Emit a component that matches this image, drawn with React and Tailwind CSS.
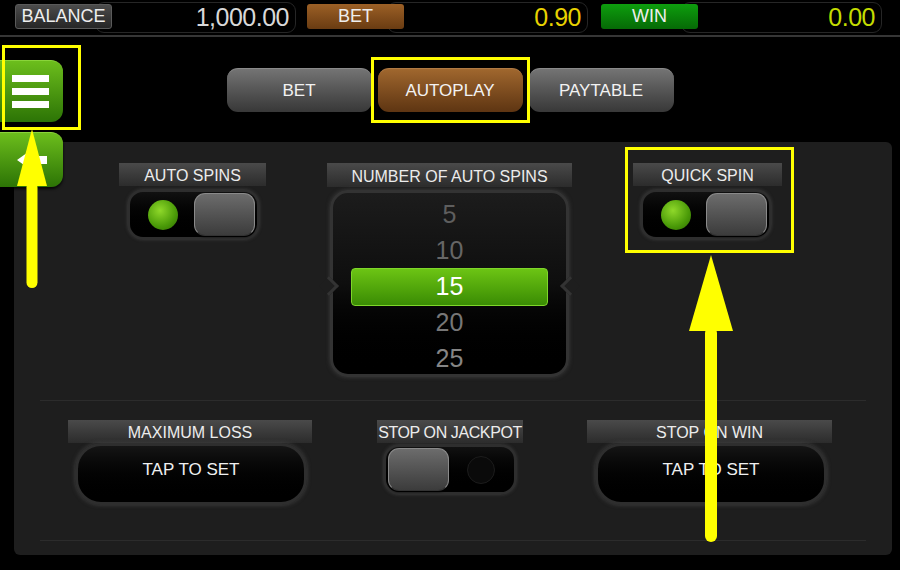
import React from "react";

const font = { fontFamily: '"Liberation Sans", Arial, sans-serif' };

function TopGroup({ label, value, labelCls, valueCls, className = "" }) {
  return (
    <div className={"flex items-start " + className}>
      <div
        className={
          "relative z-10 mt-[2px] flex h-[25px] w-[97px] items-center justify-center rounded-[3px] text-[18px] text-[#eeeeee] " +
          labelCls
        }
      >
        {label}
      </div>
      <div className="-ml-[17px] flex h-[31px] w-[201px] items-center justify-end rounded-[9px] border border-[#262626] bg-black pr-[6px]">
        <span className={"text-[25px] font-light tracking-[-0.5px] " + valueCls}>{value}</span>
      </div>
    </div>
  );
}

function Tab({ children, active }) {
  return (
    <div
      className={
        "flex h-[44px] w-[145px] items-center justify-center rounded-[11px] border-t text-[17px] text-[#f2f2f2] shadow-[0_2px_3px_rgba(0,0,0,0.8)] " +
        (active
          ? "border-[#b07a44] bg-gradient-to-b from-[#a0672e] to-[#5e3512]"
          : "border-[#8a8a8a] bg-gradient-to-b from-[#747474] to-[#383838]")
      }
    >
      {children}
    </div>
  );
}

function Header({ children, className = "" }) {
  return (
    <div
      className={
        "flex h-[23px] items-center justify-center whitespace-nowrap bg-gradient-to-b from-[#4a4a4a] to-[#2c2c2c] pt-[3px] text-[16px] leading-none text-[#ececec] " +
        className
      }
    >
      {children}
    </div>
  );
}

function Knob({ className = "" }) {
  return (
    <div
      className={
        "h-[43px] w-[61px] rounded-[11px] border border-[#8a8a8a] border-b-[#333] bg-gradient-to-b from-[#6c6c6c] to-[#3c3c3c] shadow-[0_1px_2px_rgba(0,0,0,0.9)] " +
        className
      }
    />
  );
}

function Toggle({ on, className = "" }) {
  return (
    <div
      className={
        "flex h-[51px] items-center rounded-[16px] border-[3px] border-[#2e2e2e] bg-gradient-to-b from-[#111] to-[#000] px-[2px] shadow-[0_0_3px_rgba(60,60,60,0.9)] " +
        className
      }
    >
      {on ? (
        <>
          <div className="flex flex-1 justify-center">
            <div className="h-[30px] w-[30px] rounded-full bg-[radial-gradient(circle_at_40%_35%,#8fd82a,#4a9a08_60%,#2e6a02)]" />
          </div>
          <Knob />
        </>
      ) : (
        <>
          <Knob />
          <div className="flex flex-1 justify-center">
            <div className="h-[28px] w-[28px] rounded-full border border-[#1c1c1c] bg-[#0a0a0a]" />
          </div>
        </>
      )}
    </div>
  );
}

function TapField({ className = "" }) {
  return (
    <div
      className={
        "flex h-[62px] items-center justify-center rounded-[26px] border-[3px] border-[#2e2e2e] bg-gradient-to-b from-[#151515] to-[#000] pb-[8px] text-[17px] text-[#f0f0f0] shadow-[0_0_4px_rgba(70,70,70,0.9)] " +
        className
      }
    >
      TAP TO SET
    </div>
  );
}

function YellowArrow({ x, tipY, headY, endY, headW, shaftW }) {
  const w = headW + 4;
  const h = endY - tipY + 4;
  const cx = w / 2;
  return (
    <svg
      className="pointer-events-none absolute z-30"
      style={{ left: x - cx, top: tipY - 2 }}
      width={w}
      height={h}
    >
      <polygon
        points={`${cx},2 ${cx + headW / 2},${headY - tipY + 2} ${cx - headW / 2},${headY - tipY + 2}`}
        fill="#ffff00"
      />
      <rect
        x={cx - shaftW / 2}
        y={headY - tipY - 2}
        width={shaftW}
        height={endY - headY + 2}
        rx={shaftW / 2}
        fill="#ffff00"
      />
    </svg>
  );
}

export default function App() {
  const nums = [
    { n: "5", c: "text-[#5e5e5e]" },
    { n: "10", c: "text-[#666666]" },
    { n: "15", c: "text-white" },
    { n: "20", c: "text-[#777777]" },
    { n: "25", c: "text-[#858585]" },
  ];
  return (
    <div className="relative h-[570px] w-[900px] overflow-hidden bg-black" style={font}>
      {/* Top bar */}
      <div className="flex h-[37px] border-b-2 border-[#363636] pl-[15px] pt-[2px]">
        <TopGroup
          label="BALANCE"
          value="1,000.00"
          labelCls="border border-[#5a5a5a] bg-gradient-to-b from-[#4c4c4c] to-[#262626]"
          valueCls="text-[#d8d8d8]"
        />
        <TopGroup
          className="ml-[11px]"
          label="BET"
          value="0.90"
          labelCls="bg-gradient-to-b from-[#9c6026] to-[#6a3c12]"
          valueCls="text-[#e8d200]"
        />
        <TopGroup
          className="ml-[13px]"
          label="WIN"
          value="0.00"
          labelCls="bg-gradient-to-b from-[#0e9e0e] to-[#066a06]"
          valueCls="text-[#c4dc00]"
        />
      </div>

      {/* Tabs */}
      <div className="mt-[31px] flex justify-center gap-[6px]">
        <Tab>BET</Tab>
        <Tab active>AUTOPLAY</Tab>
        <Tab>PAYTABLE</Tab>
      </div>

      {/* Main panel */}
      <div className="ml-[14px] mr-[8px] mt-[30px] h-[413px] rounded-[6px] bg-[#1e1e1e] pt-[21px]">
        <div className="flex h-[214px] items-start pl-[105px]">
          {/* Auto spins */}
          <div className="flex w-[147px] flex-col">
            <Header>AUTO SPINS</Header>
            <Toggle on className="mx-[8px] mt-[3px] mr-[6px]" />
          </div>
          {/* Number of auto spins */}
          <div className="ml-[61px] flex w-[245px] flex-col">
            <Header className="h-[24px]">NUMBER OF AUTO SPINS</Header>
            <div className="relative mx-[3px] mt-[3px] h-[187px] rounded-[18px] border-[3px] border-[#333333] bg-gradient-to-b from-[#1c1c1c] via-[#0e0e0e] to-[#000] pt-[4px] shadow-[0_0_4px_rgba(70,70,70,0.8)]">
              <div className="absolute left-[-11px] top-[86px] h-[14px] w-[14px] rotate-45 border-r-[3px] border-t-[3px] border-[#333333] bg-[#1e1e1e]" />
              <div className="absolute right-[-11px] top-[86px] h-[14px] w-[14px] rotate-45 border-b-[3px] border-l-[3px] border-[#333333] bg-[#1e1e1e]" />
              <div className="flex flex-col">
                {nums.map((it) =>
                  it.n === "15" ? (
                    <div
                      key={it.n}
                      className="mx-[18px] my-[-1px] flex h-[38px] items-center justify-center rounded-[4px] border border-[#7ed62a] bg-gradient-to-b from-[#6cc414] to-[#3a8c04] text-[25px] text-white"
                    >
                      {it.n}
                    </div>
                  ) : (
                    <div key={it.n} className={"flex h-[36px] items-center justify-center text-[25px] " + it.c}>
                      {it.n}
                    </div>
                  )
                )}
              </div>
            </div>
          </div>
          {/* Quick spin */}
          <div className="ml-[61px] flex w-[149px] flex-col">
            <Header>QUICK SPIN</Header>
            <Toggle on className="mx-[7px] mt-[3px] mr-[10px]" />
          </div>
        </div>

        {/* separator */}
        <div className="mx-[26px] mt-[23px] h-[1px] bg-[#2c2c2c]" />

        <div className="flex h-[139px] items-start pl-[54px] pt-[19px]">
          <div className="flex w-[244px] flex-col">
            <Header>MAXIMUM LOSS</Header>
            <TapField className="ml-[7px] mr-[5px]" />
          </div>
          <div className="ml-[65px] flex w-[146px] flex-col">
            <Header className="h-[22px] text-[15px] tracking-[-0.4px]">STOP ON JACKPOT</Header>
            <Toggle className="mx-[6px] mt-[1px]" />
          </div>
          <div className="ml-[64px] flex w-[245px] flex-col">
            <Header>STOP ON WIN</Header>
            <TapField className="ml-[8px] mr-[5px]" />
          </div>
        </div>

        <div className="mx-[26px] h-[1px] bg-[#2c2c2c]" />
      </div>

      {/* Green side buttons (overlay) */}
      <div className="absolute left-0 top-[60px] z-20 flex h-[62px] w-[63px] flex-col items-center justify-center gap-[6px] rounded-r-[12px] border-t border-[#8ad43a] bg-gradient-to-b from-[#6cbe1c] to-[#2c7406] pr-[2px] shadow-[0_2px_3px_rgba(0,0,0,0.8)]">
        <div className="h-[7px] w-[37px] bg-white" />
        <div className="h-[7px] w-[37px] bg-white" />
        <div className="h-[7px] w-[37px] bg-white" />
      </div>
      <div className="absolute left-0 top-[132px] z-20 flex h-[55px] w-[63px] items-center justify-center rounded-r-[12px] border-t border-[#8ad43a] bg-gradient-to-b from-[#6cbe1c] to-[#2c7406] shadow-[0_2px_3px_rgba(0,0,0,0.8)]">
        <svg width="34" height="24" viewBox="0 0 34 24">
          <polygon points="2,12 16,2 16,8 32,8 32,16 16,16 16,22" fill="#ffffff" />
        </svg>
      </div>

      {/* Yellow annotations */}
      <div className="pointer-events-none absolute left-[2px] top-[45px] z-30 h-[85px] w-[79px] border-[3px] border-[#ffff00]" />
      <div className="pointer-events-none absolute left-[371px] top-[57px] z-30 h-[66px] w-[159px] border-[3px] border-[#ffff00]" />
      <div className="pointer-events-none absolute left-[625px] top-[147px] z-30 h-[106px] w-[169px] border-[3px] border-[#ffff00]" />
      <YellowArrow x={32} tipY={129} headY={186} endY={290} headW={30} shaftW={11} />
      <YellowArrow x={711} tipY={255} headY={331} endY={544} headW={44} shaftW={12} />
    </div>
  );
}
